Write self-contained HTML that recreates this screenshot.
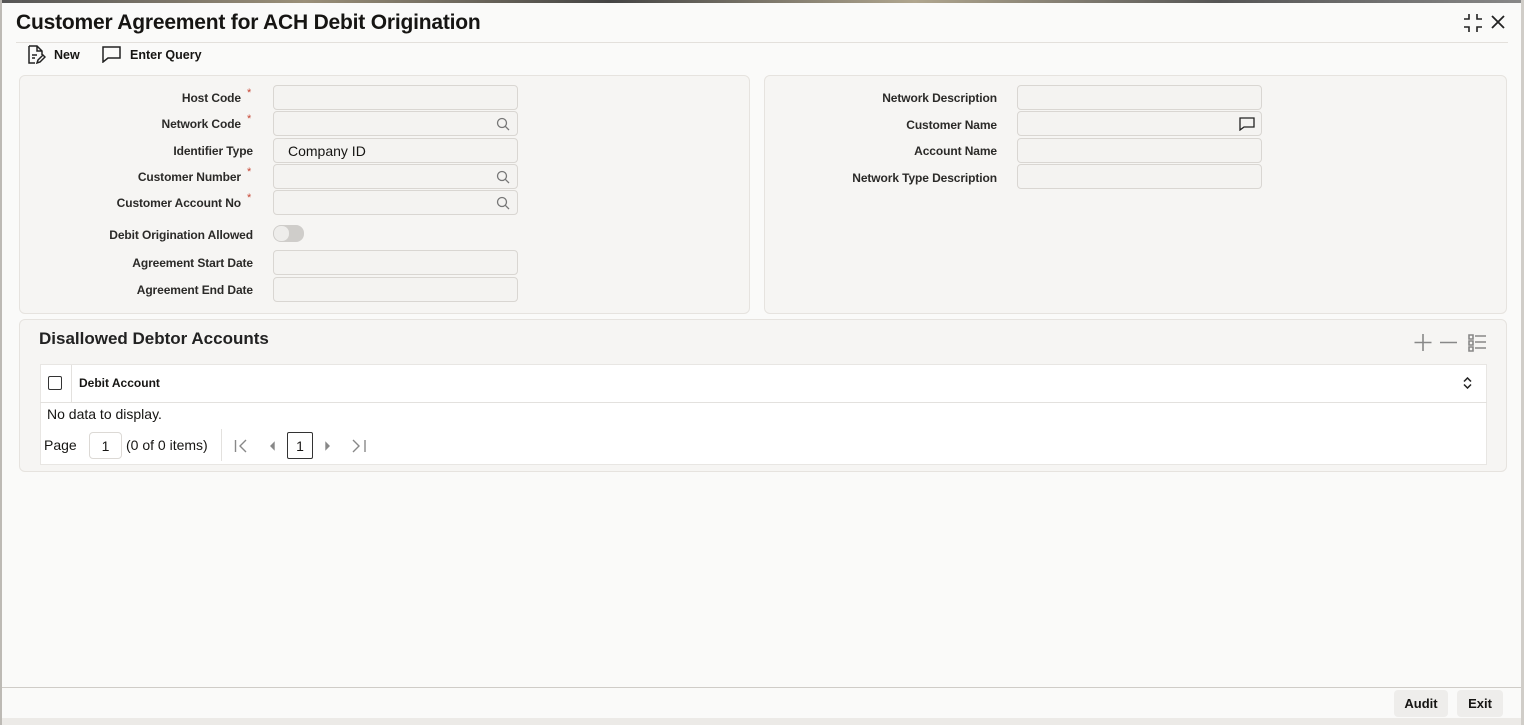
<!DOCTYPE html>
<html><head><style>
*{box-sizing:border-box;margin:0;padding:0}
body{width:1524px;height:725px;position:relative;overflow:hidden;background:#fafaf9;font-family:"Liberation Sans",sans-serif;color:#161513}
.a{position:absolute}
.topbar{left:0;top:0;width:1524px;height:3px;background:linear-gradient(90deg,#555 0,#9a8f78 20%,#444 40%,#b0a68f 60%,#555 80%,#888 100%)}
.panel{background:#f6f5f3;border:1px solid #e6e3df;border-radius:6px}
.lbl{font-size:12px;font-weight:bold;color:#2b2a28;text-align:right;width:240px;letter-spacing:-0.1px}
.star{color:#c74634;font-size:11px}
.inp{background:#f4f3f1;border:1px solid #d9d6d2;border-radius:4px;height:25px;width:245px}
.mag{position:absolute;right:7px;top:5px}
</style></head><body>
<div class="a topbar"></div>
<div class="a" style="left:0;top:0;width:2px;height:725px;background:#bdbab5"></div>
<div class="a" style="left:16px;top:11px;font-size:21px;font-weight:bold;letter-spacing:-0.2px">Customer Agreement for ACH Debit Origination</div>
<div class="a" style="left:16px;top:42px;width:1492px;height:1px;background:#e3e0dc"></div>
<svg class="a" style="left:1462px;top:13px" width="22" height="20" viewBox="0 0 22 20" fill="none" stroke="#222" stroke-width="1.6"><path d="M7 1v5H2M15 1v5h5M7 19v-5H2M15 19v-5h5"/></svg>
<svg class="a" style="left:1491px;top:15px" width="14" height="14" viewBox="0 0 14 14" stroke="#222" stroke-width="1.8"><path d="M1 1l12 12M13 1L1 13"/></svg>
<svg class="a" style="left:26px;top:45px" width="20" height="20" viewBox="0 0 20 20" fill="none" stroke="#222" stroke-width="1.5"><path d="M3 1h8l5 5v4M11 1v5h5M3 1v17h6M6 10h5M6 13h3M11 18l1-3 5-5 2 2-5 5z"/></svg>
<div class="a" style="left:54px;top:48px;font-size:12.5px;font-weight:bold">New</div>
<svg class="a" style="left:102px;top:46px" width="19" height="17" viewBox="0 0 19 17" fill="none" stroke="#222" stroke-width="1.5"><path d="M1 1h17v11H6l-5 4z"/></svg>
<div class="a" style="left:130px;top:48px;font-size:12.5px;font-weight:bold">Enter Query</div>

<div class="a panel" style="left:19px;top:75px;width:731px;height:239px"></div>
<div class="a panel" style="left:764px;top:75px;width:743px;height:239px"></div>

<div class="a lbl" style="left:1px;top:91px">Host Code</div><div class="a star" style="left:247px;top:87px">*</div>
<div class="a inp" style="left:273px;top:85px"></div>
<div class="a lbl" style="left:1px;top:117px">Network Code</div><div class="a star" style="left:247px;top:113px">*</div>
<div class="a inp" style="left:273px;top:111px"><svg class="mag" width="14" height="14" viewBox="0 0 14 14" fill="none" stroke="#777" stroke-width="1.3"><circle cx="6" cy="6" r="4.5"/><path d="M9.3 9.3L13 13"/></svg></div>
<div class="a lbl" style="left:13px;top:144px">Identifier Type</div>
<div class="a inp" style="left:273px;top:138px;font-size:14px;padding:4px 0 0 14px">Company ID</div>
<div class="a lbl" style="left:1px;top:170px">Customer Number</div><div class="a star" style="left:247px;top:166px">*</div>
<div class="a inp" style="left:273px;top:164px"><svg class="mag" width="14" height="14" viewBox="0 0 14 14" fill="none" stroke="#777" stroke-width="1.3"><circle cx="6" cy="6" r="4.5"/><path d="M9.3 9.3L13 13"/></svg></div>
<div class="a lbl" style="left:1px;top:196px">Customer Account No</div><div class="a star" style="left:247px;top:192px">*</div>
<div class="a inp" style="left:273px;top:190px"><svg class="mag" width="14" height="14" viewBox="0 0 14 14" fill="none" stroke="#777" stroke-width="1.3"><circle cx="6" cy="6" r="4.5"/><path d="M9.3 9.3L13 13"/></svg></div>
<div class="a lbl" style="left:13px;top:228px">Debit Origination Allowed</div>
<div class="a" style="left:273px;top:225px;width:31px;height:17px;border-radius:8px;background:#cfcdca"><div style="position:absolute;left:1px;top:1px;width:15px;height:15px;border-radius:7px;background:#eeedeb"></div></div>
<div class="a lbl" style="left:13px;top:256px">Agreement Start Date</div>
<div class="a inp" style="left:273px;top:250px"></div>
<div class="a lbl" style="left:13px;top:283px">Agreement End Date</div>
<div class="a inp" style="left:273px;top:277px"></div>

<div class="a lbl" style="left:757px;top:91px">Network Description</div>
<div class="a inp" style="left:1017px;top:85px"></div>
<div class="a lbl" style="left:757px;top:118px">Customer Name</div>
<div class="a inp" style="left:1017px;top:111px"><svg class="a" style="right:6px;top:5px" width="16" height="14" viewBox="0 0 16 14" fill="none" stroke="#222" stroke-width="1.3"><path d="M1 1h14v9H5l-4 3z"/></svg></div>
<div class="a lbl" style="left:757px;top:144px">Account Name</div>
<div class="a inp" style="left:1017px;top:138px"></div>
<div class="a lbl" style="left:757px;top:171px">Network Type Description</div>
<div class="a inp" style="left:1017px;top:164px"></div>

<div class="a panel" style="left:19px;top:319px;width:1488px;height:153px"></div>
<div class="a" style="left:39px;top:329px;font-size:17px;font-weight:bold;color:#222">Disallowed Debtor Accounts</div>
<svg class="a" style="left:1413px;top:332px" width="75" height="20" viewBox="0 0 75 20" fill="none" stroke="#888" stroke-width="1.6"><path d="M10 2v17M1.5 10.5h17M27 10.5h17M56 3h4v4h-4zM56 9h4v4h-4zM56 15h4v4h-4zM62 4h11M62 10h11M62 16h11"/></svg>
<div class="a" style="left:40px;top:364px;width:1447px;height:101px;background:#fff;border:1px solid #e8e6e3"></div>
<div class="a" style="left:40px;top:402px;width:1447px;height:1px;background:#e3e1de"></div>
<div class="a" style="left:71px;top:365px;width:1px;height:37px;background:#e3e1de"></div>
<div class="a" style="left:48px;top:376px;width:14px;height:14px;border:1.5px solid #333;border-radius:2px"></div>
<div class="a" style="left:79px;top:376px;font-size:12px;font-weight:bold">Debit Account</div>
<svg class="a" style="left:1463px;top:377px" width="9" height="12" viewBox="0 0 9 12" fill="none" stroke="#222" stroke-width="1.5"><path d="M1 4.5l3.5-3.5 3.5 3.5M1 7.5l3.5 3.5 3.5-3.5"/></svg>
<div class="a" style="left:47px;top:406px;font-size:14px">No data to display.</div>
<div class="a" style="left:44px;top:437px;font-size:14px">Page</div>
<div class="a" style="left:89px;top:432px;width:33px;height:27px;border:1px solid #dcd9d5;border-radius:4px;font-size:14px;text-align:center;padding-top:5px">1</div>
<div class="a" style="left:126px;top:437px;font-size:14px">(0 of 0 items)</div>
<div class="a" style="left:221px;top:429px;width:1px;height:32px;background:#e3e1de"></div>
<svg class="a" style="left:234px;top:439px" width="135" height="14" viewBox="0 0 135 14" fill="none" stroke="#888" stroke-width="1.4"><path d="M1.5 1v12M12 1L6 7l6 6"/><path d="M40 4v6l-3-3z" fill="#888"/><path d="M92 4v6l3-3z" fill="#888"/><path d="M119 1l6 6-6 6M131 1v12"/></svg>
<div class="a" style="left:287px;top:432px;width:26px;height:27px;border:1.3px solid #333;border-radius:2px;font-size:14px;text-align:center;padding-top:5px">1</div>

<div class="a" style="left:2px;top:687px;width:1522px;height:1px;background:#cfccc8"></div>
<div class="a" style="left:2px;top:718px;width:1522px;height:7px;background:#eceae7"></div>
<div class="a" style="left:1394px;top:690px;width:54px;height:27px;background:#eeedeb;border-radius:4px;font-size:13px;font-weight:bold;text-align:center;padding-top:6px">Audit</div>
<div class="a" style="left:1457px;top:690px;width:46px;height:27px;background:#eeedeb;border-radius:4px;font-size:13px;font-weight:bold;text-align:center;padding-top:6px">Exit</div>
<div class="a" style="left:1521px;top:0;width:3px;height:725px;background:#d0cdc8"></div>
</body></html>
